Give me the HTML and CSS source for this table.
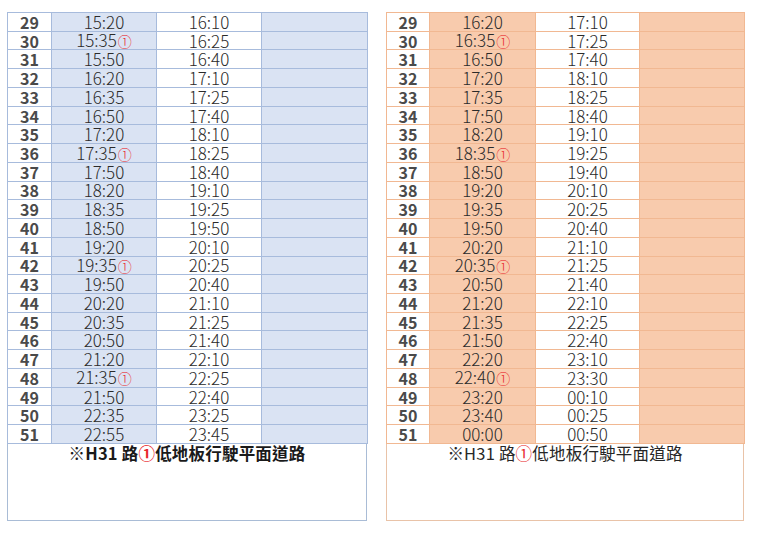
FILE: index.html
```html
<!DOCTYPE html>
<html lang="zh-Hant">
<head>
<meta charset="utf-8">
<title>H31 時刻表</title>
<link rel="stylesheet" href="styles.css">
</head>
<body>
<div class="page">
  <section class="sheet blue">
    <table class="tt">
      <colgroup><col class="c-no"><col class="c-a"><col class="c-b"><col class="c-c"></colgroup>
      <tbody>
        <tr><td class="no">29</td><td class="fill">15:20</td><td>16:10</td><td class="fill"></td></tr>
        <tr><td class="no">30</td><td class="fill">15:35<span class="mk">①</span></td><td>16:25</td><td class="fill"></td></tr>
        <tr><td class="no">31</td><td class="fill">15:50</td><td>16:40</td><td class="fill"></td></tr>
        <tr><td class="no">32</td><td class="fill">16:20</td><td>17:10</td><td class="fill"></td></tr>
        <tr><td class="no">33</td><td class="fill">16:35</td><td>17:25</td><td class="fill"></td></tr>
        <tr><td class="no">34</td><td class="fill">16:50</td><td>17:40</td><td class="fill"></td></tr>
        <tr><td class="no">35</td><td class="fill">17:20</td><td>18:10</td><td class="fill"></td></tr>
        <tr><td class="no">36</td><td class="fill">17:35<span class="mk">①</span></td><td>18:25</td><td class="fill"></td></tr>
        <tr><td class="no">37</td><td class="fill">17:50</td><td>18:40</td><td class="fill"></td></tr>
        <tr><td class="no">38</td><td class="fill">18:20</td><td>19:10</td><td class="fill"></td></tr>
        <tr><td class="no">39</td><td class="fill">18:35</td><td>19:25</td><td class="fill"></td></tr>
        <tr><td class="no">40</td><td class="fill">18:50</td><td>19:50</td><td class="fill"></td></tr>
        <tr><td class="no">41</td><td class="fill">19:20</td><td>20:10</td><td class="fill"></td></tr>
        <tr><td class="no">42</td><td class="fill">19:35<span class="mk">①</span></td><td>20:25</td><td class="fill"></td></tr>
        <tr><td class="no">43</td><td class="fill">19:50</td><td>20:40</td><td class="fill"></td></tr>
        <tr><td class="no">44</td><td class="fill">20:20</td><td>21:10</td><td class="fill"></td></tr>
        <tr><td class="no">45</td><td class="fill">20:35</td><td>21:25</td><td class="fill"></td></tr>
        <tr><td class="no">46</td><td class="fill">20:50</td><td>21:40</td><td class="fill"></td></tr>
        <tr><td class="no">47</td><td class="fill">21:20</td><td>22:10</td><td class="fill"></td></tr>
        <tr><td class="no">48</td><td class="fill">21:35<span class="mk">①</span></td><td>22:25</td><td class="fill"></td></tr>
        <tr><td class="no">49</td><td class="fill">21:50</td><td>22:40</td><td class="fill"></td></tr>
        <tr><td class="no">50</td><td class="fill">22:35</td><td>23:25</td><td class="fill"></td></tr>
        <tr><td class="no">51</td><td class="fill">22:55</td><td>23:45</td><td class="fill"></td></tr>
      </tbody>
    </table>
    <div class="note bold">※H31 路<span class="mk">①</span>低地板行駛平面道路</div>
  </section>

  <section class="sheet peach">
    <table class="tt">
      <colgroup><col class="c-no"><col class="c-a"><col class="c-b"><col class="c-c"></colgroup>
      <tbody>
        <tr><td class="no">29</td><td class="fill">16:20</td><td>17:10</td><td class="fill"></td></tr>
        <tr><td class="no">30</td><td class="fill">16:35<span class="mk">①</span></td><td>17:25</td><td class="fill"></td></tr>
        <tr><td class="no">31</td><td class="fill">16:50</td><td>17:40</td><td class="fill"></td></tr>
        <tr><td class="no">32</td><td class="fill">17:20</td><td>18:10</td><td class="fill"></td></tr>
        <tr><td class="no">33</td><td class="fill">17:35</td><td>18:25</td><td class="fill"></td></tr>
        <tr><td class="no">34</td><td class="fill">17:50</td><td>18:40</td><td class="fill"></td></tr>
        <tr><td class="no">35</td><td class="fill">18:20</td><td>19:10</td><td class="fill"></td></tr>
        <tr><td class="no">36</td><td class="fill">18:35<span class="mk">①</span></td><td>19:25</td><td class="fill"></td></tr>
        <tr><td class="no">37</td><td class="fill">18:50</td><td>19:40</td><td class="fill"></td></tr>
        <tr><td class="no">38</td><td class="fill">19:20</td><td>20:10</td><td class="fill"></td></tr>
        <tr><td class="no">39</td><td class="fill">19:35</td><td>20:25</td><td class="fill"></td></tr>
        <tr><td class="no">40</td><td class="fill">19:50</td><td>20:40</td><td class="fill"></td></tr>
        <tr><td class="no">41</td><td class="fill">20:20</td><td>21:10</td><td class="fill"></td></tr>
        <tr><td class="no">42</td><td class="fill">20:35<span class="mk">①</span></td><td>21:25</td><td class="fill"></td></tr>
        <tr><td class="no">43</td><td class="fill">20:50</td><td>21:40</td><td class="fill"></td></tr>
        <tr><td class="no">44</td><td class="fill">21:20</td><td>22:10</td><td class="fill"></td></tr>
        <tr><td class="no">45</td><td class="fill">21:35</td><td>22:25</td><td class="fill"></td></tr>
        <tr><td class="no">46</td><td class="fill">21:50</td><td>22:40</td><td class="fill"></td></tr>
        <tr><td class="no">47</td><td class="fill">22:20</td><td>23:10</td><td class="fill"></td></tr>
        <tr><td class="no">48</td><td class="fill">22:40<span class="mk">①</span></td><td>23:30</td><td class="fill"></td></tr>
        <tr><td class="no">49</td><td class="fill">23:20</td><td>00:10</td><td class="fill"></td></tr>
        <tr><td class="no">50</td><td class="fill">23:40</td><td>00:25</td><td class="fill"></td></tr>
        <tr><td class="no">51</td><td class="fill">00:00</td><td>00:50</td><td class="fill"></td></tr>
      </tbody>
    </table>
    <div class="note">※H31 路<span class="mk">①</span>低地板行駛平面道路</div>
  </section>
</div>
</body>
</html>
```

FILE: styles.css
```css
html, body {
  margin: 0;
  padding: 0;
  background: #ffffff;
}

body {
  font-family: "Noto Sans CJK TC", "Noto Sans", sans-serif;
  color: #262626;
}

.page {
  display: flex;
  align-items: flex-start;
  gap: 19px;
  padding: 12px 0 0 7px;
}

.sheet {
  display: flex;
  flex-direction: column;
}

.blue { width: 360px; --line: #a7bbdc; --fill: #dae3f3; --box: #a9bcd6; }
.peach { width: 358px; --line: #f1b892; --fill: #f8cbad; --box: #e9c3a8; }

.tt {
  width: 100%;
  border-collapse: collapse;
  table-layout: fixed;
}

.blue .c-no { width: 44px; }
.blue .c-a { width: 105px; }
.blue .c-b { width: 105px; }
.blue .c-c { width: 106px; }

.peach .c-no { width: 43px; }
.peach .c-a { width: 106px; }
.peach .c-b { width: 104px; }
.peach .c-c { width: 105px; }

.tt tr {
  height: 18.74px;
}

.tt td {
  border: 1px solid var(--line);
  padding: 0;
  height: 16px;
  text-align: center;
  vertical-align: middle;
  font-size: 17px;
  line-height: 16px;
  font-weight: 300;
  color: #2a2a2a;
  white-space: nowrap;
}

.tt td.no {
  font-weight: 700;
  color: #4a4a4a;
  font-size: 16px;
}

.tt td.fill {
  background: var(--fill);
}

.mk {
  color: #e8262b;
  font-size: 14px;
  margin-left: 1px;
}

.note {
  height: 76px;
  border: 1px solid var(--box);
  border-top: none;
  text-align: center;
  font-size: 16.5px;
  line-height: 18px;
  padding-top: 0;
  color: #262626;
  letter-spacing: 0.2px;
}

.note .mk {
  font-size: 16.5px;
  margin-left: 0;
}

.note.bold {
  font-weight: 700;
  color: #1a1a1a;
}
```
